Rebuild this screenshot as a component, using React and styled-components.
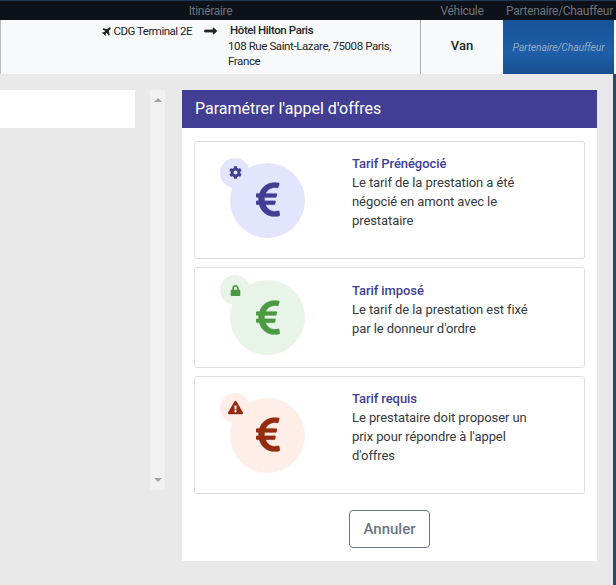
import React from "react";
import styled, { createGlobalStyle } from "styled-components";
import {
  FaPlane,
  FaLongArrowAltRight,
  FaCog,
  FaLock,
  FaExclamationTriangle,
  FaEuroSign,
} from "react-icons/fa";

const GlobalStyle = createGlobalStyle`
  html, body {
    margin: 0;
    padding: 0;
    height: 100%;
    background: #e9e9e9;
    overflow: hidden;
    font-family: Roboto, "Liberation Sans", sans-serif;
  }
`;

const Page = styled.div`
  width: 616px;
  height: 585px;
  display: flex;
  flex-direction: column;
  overflow: hidden;
`;
const TableHead = styled.div`
  height: 19px;
  display: grid;
  grid-template-columns: 421px 82px 113px;
  align-items: center;
  background: #0d1119;
  border-top: 1px solid #1f3a52;
  color: #6f7479;
  font-size: 12px;
  letter-spacing: -0.3px;
`;
const HeadCell = styled.div`
  text-align: center;
  white-space: nowrap;
`;
const TableRow = styled.div`
  height: 54px;
  display: grid;
  grid-template-columns: 421px 82px 111px 2px;
  background: #f8f9fb;
  color: #212529;
  font-size: 12px;
`;
const RouteCell = styled.div`
  display: flex;
  justify-content: flex-end;
  padding: 2px 22px 0 0;
  border-right: 1px solid #a9abad;
  border-left: 1px solid #b9bcc0;
`;
const From = styled.div`
  display: flex;
  align-items: center;
  gap: 2px;
  height: 18px;
  font-size: 11.5px;
  letter-spacing: -0.5px;
  white-space: nowrap;
  svg {
    width: 10px;
    height: 10px;
    transform: rotate(-45deg);
  }
`;
const Arrow = styled(FaLongArrowAltRight)`
  width: 13px;
  height: 14px;
  margin: 2px 11px 0 12px;
  flex: none;
  stroke-width: 24;
`;
const To = styled.div`
  width: 170px;
  padding-top: 1px;
  line-height: 15.5px;
  font-size: 11.5px;
  letter-spacing: -0.4px;
`;
const ToName = styled.div`
  font-weight: 500;
  padding-left: 2px;
`;
const VehicleCell = styled.div`
  display: flex;
  align-items: center;
  justify-content: center;
  font-weight: 500;
  font-size: 13px;
  padding-bottom: 3px;
`;
const PartnerCell = styled.div`
  display: flex;
  align-items: center;
  justify-content: center;
  background: linear-gradient(#175295, #1e5fa8 60%, #17508f);
  color: #94a9c4;
  font-size: 10.5px;
  font-style: italic;
  letter-spacing: -0.2px;
  white-space: nowrap;
`;
const RowEnd = styled.div`
  background: #f8f9fb;
`;
const Body = styled.div`
  flex: 1;
  display: flex;
  align-items: flex-start;
  padding: 16px 0 0 0;
  border-right: 3px solid #2a4a6b;
`;
const LeftPanel = styled.div`
  width: 135px;
  height: 38px;
  background: #fff;
  flex: none;
`;
const ScrollTrack = styled.div`
  width: 15px;
  height: 400px;
  margin: 0 17px 0 15px;
  flex: none;
  background: #f1f1f1;
  display: flex;
  flex-direction: column;
  justify-content: space-between;
  align-items: center;
  padding: 8px 0;
  box-sizing: border-box;
  border-radius: 0 0 2px 2px;
`;
const ScrollArrow = styled.div`
  width: 0;
  height: 0;
  border-left: 4px solid transparent;
  border-right: 4px solid transparent;
  ${props =>
    props.$down
      ? "border-top: 4px solid #a3a3a3;"
      : "border-bottom: 4px solid #a3a3a3;"}
`;
const Modal = styled.div`
  width: 415px;
  height: 471px;
  background: #fff;
  flex: none;
  display: flex;
  flex-direction: column;
`;
const ModalHeader = styled.div`
  height: 36px;
  padding: 0 0 2px 13px;
  display: flex;
  align-items: center;
  background: #413e94;
  color: #fff;
  font-size: 16px;
`;
const Options = styled.div`
  display: flex;
  flex-direction: column;
  gap: 8px;
  padding: 13px 12px 16px;
`;
const Card = styled.div`
  height: ${props => props.$height}px;
  box-sizing: border-box;
  display: flex;
  align-items: center;
  border: 1px solid #dfdfdf;
  border-radius: 3px;
`;
const Badge = styled.div`
  position: relative;
  width: 75px;
  height: 75px;
  margin: 0 47px 0 35px;
  flex: none;
  border-radius: 50%;
  background: ${props => props.$bg};
  color: ${props => props.$color};
  display: flex;
  align-items: center;
  justify-content: center;
  svg.euro {
    width: 24px;
    height: 39px;
    margin: 0 0 1px 1px;
    stroke-width: 3;
  }
`;
const SmallBadge = styled.div`
  position: absolute;
  left: -10px;
  top: -5px;
  width: 30px;
  height: 30px;
  border-radius: 50%;
  background: ${props => props.$bg};
  display: flex;
  align-items: center;
  justify-content: center;
  font-size: ${props => props.$size || 13}px;
`;
const CardText = styled.div`
  align-self: flex-start;
  width: 185px;
  padding-top: ${props => props.$top}px;
  font-size: 13px;
  line-height: 19px;
  letter-spacing: -0.08px;
  color: #343a40;
`;
const CardTitle = styled.div`
  font-weight: 500;
  color: #413e94;
`;
const Footer = styled.div`
  display: flex;
  justify-content: center;
`;
const CancelButton = styled.button`
  width: 81px;
  height: 38px;
  background: #fff;
  border: 1px solid #6c757d;
  border-radius: 4px;
  color: #6c757d;
  font-family: inherit;
  font-size: 15px;
  font-weight: 500;
  padding: 0;
`;

const OPTIONS = [
  {
    title: "Tarif Prénégocié",
    text: "Le tarif de la prestation a été négocié en amont avec le prestataire",
    bg: "#e3e4fe",
    color: "#413e94",
    height: 118,
    top: 12,
    Icon: FaCog,
  },
  {
    title: "Tarif imposé",
    text: "Le tarif de la prestation est fixé par le donneur d'ordre",
    bg: "#e8f4e8",
    color: "#4b9a43",
    height: 101,
    top: 13,
    Icon: FaLock,
    iconSize: 11,
  },
  {
    title: "Tarif requis",
    text: "Le prestataire doit proposer un prix pour répondre à l'appel d'offres",
    bg: "#ffede8",
    color: "#932b10",
    height: 118,
    top: 12,
    Icon: FaExclamationTriangle,
    iconSize: 15,
  },
];

export default function App() {
  return (
    <Page>
      <GlobalStyle />
      <TableHead>
        <HeadCell>Itinéraire</HeadCell>
        <HeadCell>Véhicule</HeadCell>
        <HeadCell>Partenaire/Chauffeur</HeadCell>
      </TableHead>
      <TableRow>
        <RouteCell>
          <From>
            <FaPlane />
            CDG Terminal 2E
          </From>
          <Arrow />
          <To>
            <ToName>Hôtel Hilton Paris</ToName>
            108 Rue Saint-Lazare, 75008 Paris, France
          </To>
        </RouteCell>
        <VehicleCell>Van</VehicleCell>
        <PartnerCell>Partenaire/Chauffeur</PartnerCell>
        <RowEnd />
      </TableRow>
      <Body>
        <LeftPanel />
        <ScrollTrack>
          <ScrollArrow />
          <ScrollArrow $down />
        </ScrollTrack>
        <Modal>
          <ModalHeader>Paramétrer l'appel d'offres</ModalHeader>
          <Options>
            {OPTIONS.map(({ title, text, bg, color, height, top, Icon, iconSize }) => (
              <Card key={title} $height={height}>
                <Badge $bg={bg} $color={color}>
                  <SmallBadge $bg={bg} $size={iconSize}>
                    <Icon />
                  </SmallBadge>
                  <FaEuroSign className="euro" preserveAspectRatio="none" />
                </Badge>
                <CardText $top={top}>
                  <CardTitle>{title}</CardTitle>
                  {text}
                </CardText>
              </Card>
            ))}
          </Options>
          <Footer>
            <CancelButton>Annuler</CancelButton>
          </Footer>
        </Modal>
      </Body>
    </Page>
  );
}
